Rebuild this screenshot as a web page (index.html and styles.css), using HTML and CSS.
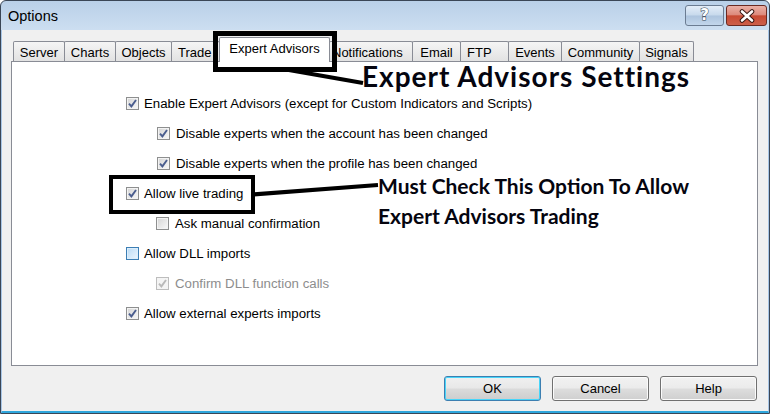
FILE: index.html
```html
<!DOCTYPE html>
<html>
<head>
<meta charset="utf-8">
<link rel="stylesheet" href="styles.css">
</head>
<body>
<div class="window">
  <div class="titlebar">
    <span class="title">Options</span>
    <div class="tb-btns">
      <div class="tb-btn help-btn"><span class="q">?</span></div>
      <div class="tb-btn close-btn">
        <svg width="18" height="14" viewBox="0 0 18 14">
          <path d="M4 2.5 L14 11.5 M14 2.5 L4 11.5" stroke="#3b1a16" stroke-width="4.6" stroke-linecap="round"/>
          <path d="M4 2.5 L14 11.5 M14 2.5 L4 11.5" stroke="#ffffff" stroke-width="2.6" stroke-linecap="round"/>
        </svg>
      </div>
    </div>
  </div>
  <div class="client">
    <div class="tabs">
      <div class="tab t-server">Server</div>
      <div class="tab t-charts">Charts</div>
      <div class="tab t-objects">Objects</div>
      <div class="tab t-trade">Trade</div>
      <div class="tab t-expert selected">Expert Advisors</div>
      <div class="tab t-notif">Notifications</div>
      <div class="tab t-email">Email</div>
      <div class="tab t-ftp">FTP</div>
      <div class="tab t-events">Events</div>
      <div class="tab t-comm">Community</div>
      <div class="tab t-signals">Signals</div>
    </div>
    <div class="panel">
      <div class="row">
        <span class="cb checked"><svg viewBox="0 0 11 11"><path d="M2 5.6 L4.4 8.4 L9 2" /></svg></span>
        <span class="label">Enable Expert Advisors (except for Custom Indicators and Scripts)</span>
      </div>
      <div class="row sub sub-a">
        <span class="cb checked"><svg viewBox="0 0 11 11"><path d="M2 5.6 L4.4 8.4 L9 2" /></svg></span>
        <span class="label">Disable experts when the account has been changed</span>
      </div>
      <div class="row sub sub-a">
        <span class="cb checked"><svg viewBox="0 0 11 11"><path d="M2 5.6 L4.4 8.4 L9 2" /></svg></span>
        <span class="label">Disable experts when the profile has been changed</span>
      </div>
      <div class="row">
        <span class="cb checked"><svg viewBox="0 0 11 11"><path d="M2 5.6 L4.4 8.4 L9 2" /></svg></span>
        <span class="label">Allow live trading</span>
      </div>
      <div class="row sub">
        <span class="cb"></span>
        <span class="label">Ask manual confirmation</span>
      </div>
      <div class="row">
        <span class="cb hover"></span>
        <span class="label">Allow DLL imports</span>
      </div>
      <div class="row sub">
        <span class="cb checked disabled"><svg viewBox="0 0 11 11"><path d="M2 5.6 L4.4 8.4 L9 2" /></svg></span>
        <span class="label disabled-text">Confirm DLL function calls</span>
      </div>
      <div class="row">
        <span class="cb checked"><svg viewBox="0 0 11 11"><path d="M2 5.6 L4.4 8.4 L9 2" /></svg></span>
        <span class="label">Allow external experts imports</span>
      </div>
    </div>
    <div class="buttons">
      <div class="btn default">OK</div>
      <div class="btn">Cancel</div>
      <div class="btn">Help</div>
    </div>
  </div>

  <div class="anno-box box-tab"></div>
  <div class="anno-box box-live"></div>
  <svg class="anno-lines" width="770" height="414" viewBox="0 0 770 414">
    <path d="M286 69.5 L363 83" stroke="#000" stroke-width="4.2"/>
    <path d="M253 194.5 L378 185" stroke="#000" stroke-width="4.2"/>
  </svg>
  <div class="anno-text anno-big">Expert Advisors Settings</div>
  <div class="anno-text anno-small">Must Check This Option To Allow<br>Expert Advisors Trading</div>
</div>
</body>
</html>
```

FILE: styles.css
```css
* { box-sizing: border-box; }

html, body {
  margin: 0;
  padding: 0;
  background: #ffffff;
}

body {
  font-family: "Liberation Sans", Arial, sans-serif;
  font-size: 13.25px;
  color: #000;
}

.window {
  position: relative;
  width: 770px;
  height: 414px;
  border: 1px solid #3a4656;
  border-radius: 6px 6px 0 0;
  background: linear-gradient(#b9d0e8, #cddff1 30px, #cddff1);
  display: flex;
  flex-direction: column;
  overflow: hidden;
}

/* ---------- title bar ---------- */
.titlebar {
  height: 29px;
  flex: none;
  display: flex;
  align-items: flex-start;
  padding: 0 2px 0 7px;
}

.title {
  font-size: 14.5px;
  line-height: 31px;
  color: #000;
}

.tb-btns {
  margin-left: auto;
  display: flex;
  gap: 2px;
  padding-top: 4px;
}

.tb-btn {
  height: 21px;
  border-radius: 3px;
  display: flex;
  align-items: center;
  justify-content: center;
}

.help-btn {
  width: 39px;
  border: 1px solid #6b7c92;
  background: linear-gradient(#e3edf8 0%, #c7d9ec 48%, #adc4de 52%, #c2d6eb 100%);
}

.q {
  font-family: "DejaVu Sans", sans-serif;
  font-weight: bold;
  font-size: 15px;
  line-height: 1;
  color: #fff;
  -webkit-text-stroke: 1px #33404f;
  paint-order: stroke fill;
}

.close-btn {
  width: 41px;
  border: 1px solid #6a2a22;
  background: linear-gradient(#eab0a6 0%, #dd8a7c 46%, #c84a33 52%, #cd5f4a 100%);
}

/* ---------- client area ---------- */
.client {
  flex: 1;
  background: #f0f0f0;
  border-left: 1px solid #a8c6e6;
  border-right: 1px solid #a8c6e6;
  border-bottom: 2px solid #2ea6dc;
  padding: 7px 9px 0 9px;
  display: flex;
  flex-direction: column;
}

/* ---------- tabs ---------- */
.tabs {
  height: 24px;
  display: flex;
  align-items: flex-end;
  padding-left: 2px;
  position: relative;
  z-index: 2;
  font-size: 13px;
}

.tab {
  height: 20px;
  border: 1px solid #898c95;
  border-bottom: none;
  border-radius: 2px 2px 0 0;
  background: linear-gradient(#f5f5f5, #e2e2e2);
  display: flex;
  align-items: center;
  justify-content: center;
  padding-top: 1px;
  white-space: nowrap;
  margin-right: -1px;
}

.tab.selected {
  height: 25px;
  margin-bottom: -1px;
  background: #ffffff;
  padding-top: 0;
  padding-bottom: 3px;
  position: relative;
  z-index: 3;
}

.t-server  { width: 52px; }
.t-charts  { width: 52px; }
.t-objects { width: 57px; }
.t-trade   { width: 49px; justify-content: flex-start; padding-left: 6px; }
.t-expert  { width: 111px; }
.t-notif   { width: 84px; justify-content: flex-start; padding-left: 2px; }
.t-email   { width: 49px; }
.t-ftp     { width: 49px; justify-content: flex-start; padding-left: 6px; }
.t-events  { width: 54px; }
.t-comm    { width: 79px; }
.t-signals { width: 55px; }

/* ---------- panel ---------- */
.panel {
  width: 747px;
  height: 305px;
  flex: none;
  background: #ffffff;
  border: 1px solid #898c95;
  padding: 26px 0 0 114px;
  display: flex;
  flex-direction: column;
}

.row {
  height: 30px;
  display: flex;
  align-items: center;
  gap: 5px;
}

.row.sub { padding-left: 30px; gap: 6px; }
.row.sub-a { padding-left: 31px; }

.cb {
  width: 13px;
  height: 13px;
  flex: none;
  border: 1px solid #8e8f8f;
  background: linear-gradient(135deg, #d4d4d4, #f9f9f9);
  box-shadow: inset 0 0 0 1px #f3f3f3;
  display: flex;
  align-items: center;
  justify-content: center;
}

.cb svg {
  width: 11px;
  height: 11px;
}

.cb svg path {
  fill: none;
  stroke: #4a5d8e;
  stroke-width: 1.9;
}

.cb.hover {
  border-color: #3c7eb4;
  background: linear-gradient(135deg, #b9daf5, #ecf6fe);
  box-shadow: inset 0 0 0 1px #dceefc;
}

.cb.disabled {
  border-color: #bdbdbd;
  background: #f4f4f4;
  box-shadow: none;
}

.cb.disabled svg path { stroke: #b9b9b9; }

.label { white-space: nowrap; line-height: 15px; }

.disabled-text { color: #8d8d8d; }

/* ---------- buttons ---------- */
.buttons {
  margin-top: 10px;
  width: 747px;
  display: flex;
  justify-content: flex-end;
  gap: 11px;
  padding-right: 1px;
  font-size: 13px;
}

.btn {
  width: 97px;
  height: 25px;
  border: 1px solid #707070;
  border-radius: 3px;
  background: linear-gradient(#f2f2f2 0%, #ebebeb 48%, #dddddd 52%, #cfcfcf 100%);
  box-shadow: inset 0 0 0 1px #fbfbfb;
  display: flex;
  align-items: center;
  justify-content: center;
}

.btn.default {
  border-color: #3c7fb1;
  box-shadow: inset 0 0 0 1px #48d5f9;
  background: linear-gradient(#f0f0f0 0%, #e8e8e8 48%, #dbdbdb 52%, #cdcdcd 100%);
}

/* ---------- annotations (overlay) ---------- */
.anno-box {
  position: absolute;
  border: 5px solid #000;
  z-index: 5;
}

.box-tab {
  left: 212px;
  top: 30px;
  width: 124px;
  height: 41px;
}

.box-live {
  left: 108px;
  top: 174px;
  width: 146px;
  height: 39px;
  border-width: 4px;
}

.anno-lines {
  position: absolute;
  left: -1px;
  top: -1px;
  z-index: 5;
}

.anno-text {
  position: absolute;
  font-family: Lato, "Open Sans", sans-serif;
  font-weight: bold;
  color: #05050f;
  white-space: nowrap;
  z-index: 6;
}

.anno-big {
  left: 361px;
  top: 61px;
  font-size: 28px;
  line-height: 28px;
  letter-spacing: 1px;
}

.anno-small {
  left: 377px;
  top: 170px;
  font-size: 21px;
  line-height: 30px;
}
```
